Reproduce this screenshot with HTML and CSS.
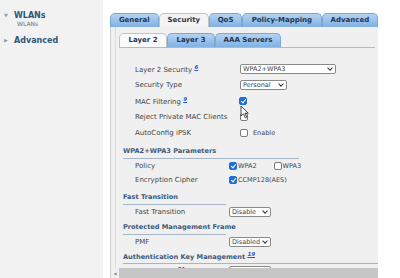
FILE: index.html
```html
<!DOCTYPE html>
<html lang="en">
<head>
    <meta charset="UTF-8">
    <title>WLAN Security</title>
    <link rel="stylesheet" href="styles.css">
</head>
<body>

<div class="page">
    <aside class="sidebar">
        <div class="nav-group"><span class="caret">&#9660;</span>WLANs</div>
        <div class="nav-sub">WLANs</div>
        <div class="nav-group"><span class="caret">&#9654;</span>Advanced</div>
    </aside>

    <main class="main">
        <ul class="tabs">
            <li class="tab">General</li>
            <li class="tab active">Security</li>
            <li class="tab">QoS</li>
            <li class="tab">Policy-Mapping</li>
            <li class="tab">Advanced</li>
        </ul>

        <div class="panel">
            <div class="panel-body">
                <ul class="subtabs">
                    <li class="subtab active">Layer 2</li>
                    <li class="subtab">Layer 3</li>
                    <li class="subtab">AAA Servers</li>
                </ul>

                <div class="form">
                    <div class="row top">
                        <span class="label">Layer 2 Security <a class="ref">6</a></span>
                        <span class="select wide">WPA2+WPA3<i class="chev"></i></span>
                    </div>
                    <div class="row top">
                        <span class="label">Security Type</span>
                        <span class="select">Personal<i class="chev"></i></span>
                    </div>
                    <div class="row top">
                        <span class="label">MAC Filtering <a class="ref">9</a></span>
                        <span class="check on"></span>
                    </div>
                    <div class="row top">
                        <span class="label">Reject Private MAC Clients</span>
                        <span class="check"></span>
                    </div>
                    <div class="row top">
                        <span class="label">AutoConfig iPSK</span>
                        <span class="check"></span><span class="opt">Enable</span>
                    </div>

                    <h4 class="section first">WPA2+WPA3 Parameters</h4>
                    <div class="row">
                        <span class="label">Policy</span>
                        <span class="check on"></span><span class="opt tight">WPA2</span>
                        <span class="check gap"></span><span class="opt tight">WPA3</span>
                    </div>
                    <div class="row">
                        <span class="label">Encryption Cipher</span>
                        <span class="check on"></span><span class="opt tight">CCMP128(AES)</span>
                    </div>

                    <h4 class="section ft">Fast Transition</h4>
                    <div class="row">
                        <span class="label">Fast Transition</span>
                        <span class="select small">Disable<i class="chev"></i></span>
                    </div>

                    <h4 class="section">Protected Management Frame</h4>
                    <div class="row">
                        <span class="label">PMF</span>
                        <span class="select small">Disabled<i class="chev"></i></span>
                    </div>

                    <h4 class="section full">Authentication Key Management <a class="ref">19</a></h4>
                    <div class="row">
                        <span class="label">PSK Format <a class="ref">21</a></span>
                        <span class="select small">ASCII<i class="chev"></i></span>
                    </div>
                </div>

                <!-- mouse pointer over the MAC Filtering box -->
                <svg class="cursor" width="10" height="14" viewBox="0 0 10 14">
                    <path d="M1 1 L1 11 L3.5 8.8 L5.3 12.8 L6.8 12.1 L5 8.2 L8.3 8.2 Z" fill="#fff" stroke="#333" stroke-width="0.9"/>
                </svg>
            </div>

            <div class="hscroll">
                <span class="arrow">&#9664;</span>
                <div class="thumb"></div>
            </div>
        </div>
    </main>
</div>

</body>
</html>
```

FILE: styles.css
```css
body {
    margin: 0;
    padding: 0;
    background: #fff;
    font-family: 'DejaVu Sans', Verdana, sans-serif;
    font-size: 7px;
    color: #333;
    overflow: hidden;
}
.page {
    display: flex;
    height: 278px;
}
.sidebar {
    width: 103px;
    background: #f2f2f2;
    padding-top: 11px;
    box-sizing: border-box;
}
.nav-group {
    font-weight: bold;
    font-size: 8px;
    color: #2d5778;
    padding-left: 4px;
}
.caret {
    display: inline-block;
    width: 10px;
    font-size: 5px;
    color: #8aa0b2;
    vertical-align: 1px;
}
.nav-sub {
    font-size: 6px;
    color: #6a6a6a;
    padding-left: 17px;
    margin-bottom: 9px;
}
.main {
    margin-left: 7px;
    width: 268px;
    padding-top: 13px;
}
.tabs, .subtabs {
    list-style: none;
    margin: 0;
    padding: 0;
    display: flex;
}
.tab, .subtab {
    height: 13px;
    line-height: 13px;
    font-weight: bold;
    font-size: 7px;
    color: #1f3550;
    background: linear-gradient(#b4d3f3, #80b1e3);
    border: 1px solid #7ea6cf;
    border-bottom: none;
    border-radius: 5px 5px 0 0;
    text-align: center;
}
.tab:nth-child(1) { width: 48px; }
.tab:nth-child(2) { width: 50px; }
.tab:nth-child(3) { width: 32px; }
.tab:nth-child(4) { width: 80px; }
.tab:nth-child(5) { width: 56px; }
.tab.active {
    background: #f3f3f3;
    border-color: #c4c4c4;
}
.panel {
    height: 251px;
    background: #f0f0f0;
    border-left: 1px solid #cfcfcf;
    display: flex;
    flex-direction: column;
}
.panel-body {
    flex: 1;
    overflow: hidden;
    position: relative;
    margin-left: 4px;
    border-left: 1px solid #dcdcdc;
    padding: 6px 3px 0 3px;
}
.subtabs {
    border-bottom: 1px solid #b9b9b9;
}
.subtab:nth-child(1) { width: 46px; }
.subtab:nth-child(2) { width: 46px; }
.subtab:nth-child(3) { width: 64px; }
.subtab.active {
    background: #fafafa;
    border-color: #c4c4c4;
}
.form {
    padding: 13px 0 0 4px;
}
.row {
    display: flex;
    align-items: center;
    height: 14px;
}
.row.top {
    height: 16px;
}
.label {
    width: 94px;
    padding-left: 12px;
    flex-shrink: 0;
    color: #444;
    white-space: nowrap;
}
.row.top .label {
    width: 104px;
}
.ref {
    color: #2a4fd0;
    font-size: 5.5px;
    font-weight: bold;
    font-style: italic;
    text-decoration: underline;
    vertical-align: 3px;
}
.select {
    display: inline-flex;
    align-items: center;
    justify-content: space-between;
    height: 10px;
    width: 47px;
    box-sizing: border-box;
    padding: 0 3px 0 2px;
    background: #fff;
    border: 1px solid #8a8a8a;
    border-radius: 2px;
    font-size: 6.5px;
    color: #444;
}
.row.top .select {
    margin-left: 1px;
}
.select.wide {
    width: 96px;
    margin-left: 0;
}
.select.small {
    width: 42px;
}
.chev {
    width: 3px;
    height: 3px;
    border-right: 1.3px solid #333;
    border-bottom: 1.3px solid #333;
    transform: rotate(45deg);
    margin-top: -2px;
}
.check {
    width: 8px;
    height: 8px;
    box-sizing: border-box;
    border: 1px solid #7a7a7a;
    border-radius: 2px;
    background: #fff;
    flex-shrink: 0;
}
.row.top .check {
    margin-left: 1px;
}
.check.on {
    background: #1f6fd6;
    border-color: #1f6fd6;
    position: relative;
}
.row.top .check.on {
    margin-left: 0;
}
.check.on::after {
    content: "";
    position: absolute;
    left: 2px;
    top: 0;
    width: 2px;
    height: 4px;
    border-right: 1px solid #fff;
    border-bottom: 1px solid #fff;
    transform: rotate(40deg);
}
.check.gap {
    margin-left: 17px;
}
.opt {
    margin-left: 5px;
    font-size: 6.5px;
    color: #444;
}
.opt.tight {
    margin-left: 1px;
}
.section {
    margin: 4px 0 0 0;
    font-size: 6.6px;
    line-height: 9px;
    font-weight: bold;
    color: #3c5a7b;
    padding-bottom: 2px;
    border-bottom: 1px solid #a4b6c8;
    width: 103px;
    white-space: nowrap;
}
.section.first {
    margin-top: 6px;
    width: 176px;
}
.section.ft {
    margin-top: 6px;
}
.section.full {
    margin-top: 1px;
    padding-bottom: 1px;
    width: 256px;
}
.cursor {
    position: absolute;
    left: 124px;
    top: 78px;
}
.hscroll {
    height: 10px;
    display: flex;
    align-items: center;
    background: #f0f0f0;
}
.arrow {
    font-size: 4px;
    color: #888;
    width: 8px;
    text-align: center;
}
.thumb {
    flex: 1;
    height: 10px;
    background: #c6c6c6;
}
```
